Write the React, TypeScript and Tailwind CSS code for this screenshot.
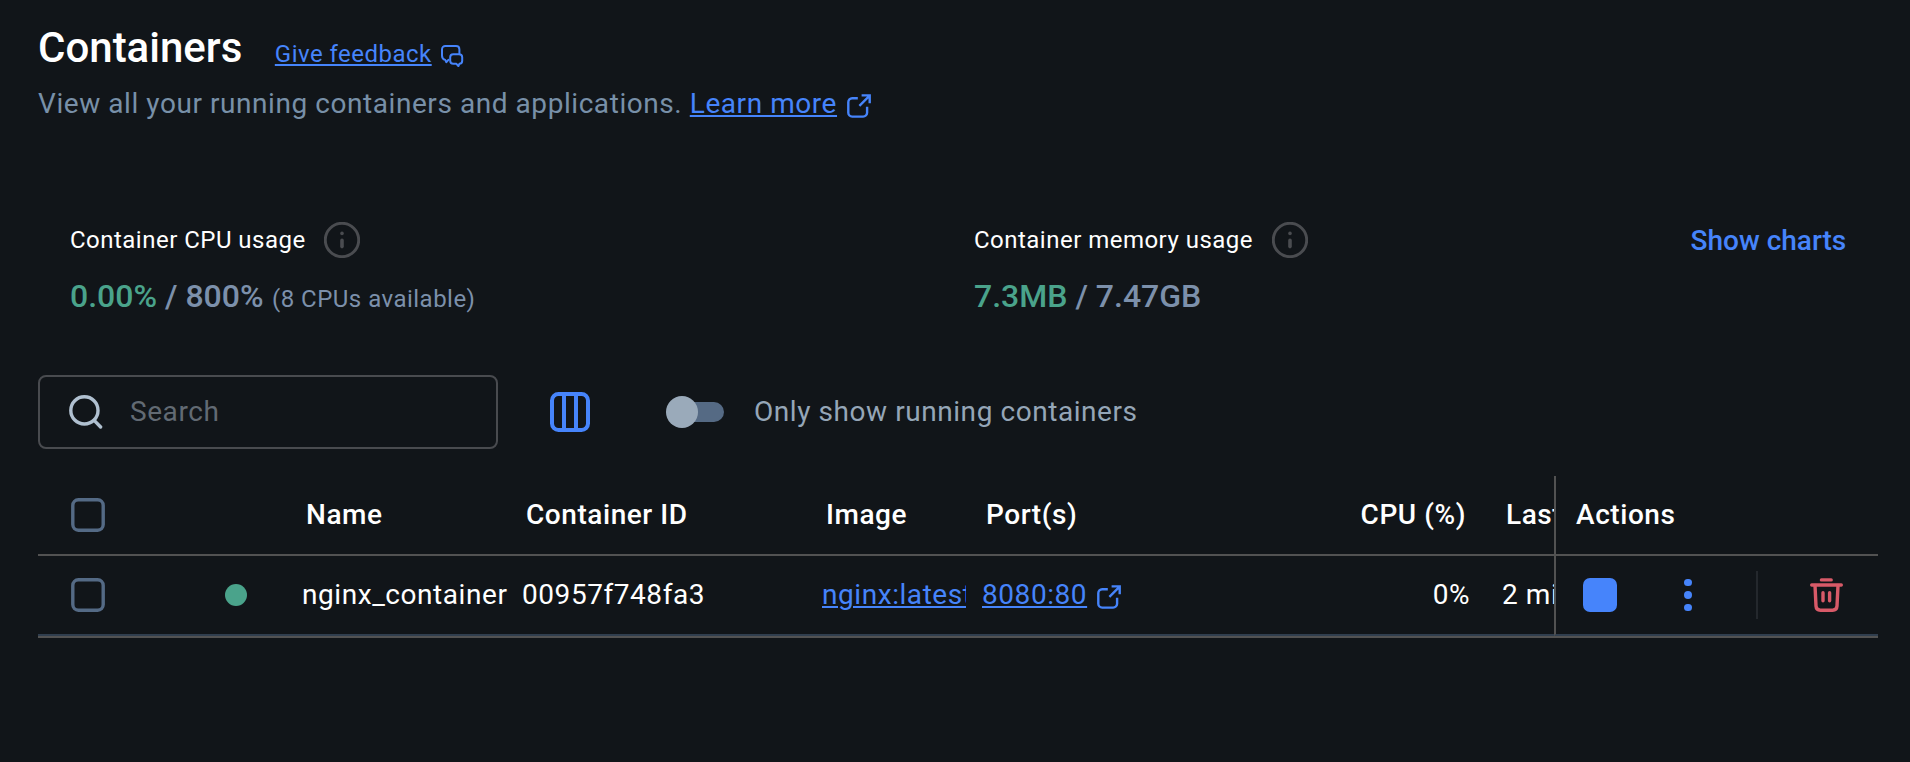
import type { ReactNode } from "react";

function FeedbackIcon() {
  return (
    <svg className="size-6" viewBox="0 0 24 24" fill="none" stroke="currentColor" strokeWidth="2" strokeLinecap="round" strokeLinejoin="round">
      <path d="M8.4 15.8 6.4 18.2 5.2 15.9C3.2 15.4 2 14 2 11.8V5.4C2 3.2 3.4 2 5.4 2H16C18 2 19.4 3.2 19.4 5.4V9.2" />
      <path d="M13.2 10.2H19C21 10.2 22.2 11.4 22.2 13.2V16.8C22.2 18.6 21 19.8 19.4 19.8L18.4 22 16.4 19.8H13.2C11.4 19.8 10.2 18.6 10.2 16.8V13.2C10.2 11.4 11.4 10.2 13.2 10.2Z" />
    </svg>
  );
}

function ExternalIcon() {
  return (
    <svg className="size-6 shrink-0" viewBox="0 0 24 24" fill="none" stroke="currentColor" strokeWidth="2.4">
      <path d="M10.8 4.2H5.2A4 4 0 0 0 1.3 8.2V18.7A4 4 0 0 0 5.2 22.6H16A4 4 0 0 0 20.1 18.7V12.8" />
      <path d="M12.4 11.8 22.4 1.8M14.6 1.4H22.7V9.2" />
    </svg>
  );
}

function InfoIcon() {
  return (
    <svg className="size-9" viewBox="0 0 36 36" fill="none" stroke="currentColor">
      <circle cx="18" cy="18" r="16.7" strokeWidth="2.9" />
      <path d="M18 18.4V24.6" strokeWidth="3.6" strokeLinecap="round" />
      <circle cx="18" cy="11.4" r="1.8" fill="currentColor" stroke="none" />
    </svg>
  );
}

function SearchIcon() {
  return (
    <svg className="h-[34px] w-[34px]" viewBox="0 0 34 34" fill="none" stroke="currentColor" strokeWidth="3.4" strokeLinecap="round">
      <circle cx="15.4" cy="15.4" r="13.6" />
      <path d="M25.4 25.6 31.6 32" />
    </svg>
  );
}

function ColumnsIcon() {
  return (
    <svg className="size-10" viewBox="0 0 40 40" fill="none" stroke="currentColor" strokeWidth="4">
      <rect x="2" y="2" width="36" height="36" rx="6.5" />
      <path d="M14 2V38M26 2V38" />
    </svg>
  );
}

function TrashIcon() {
  return (
    <svg className="h-[34px] w-[33px]" viewBox="0 0 33 34" fill="none" stroke="currentColor" strokeWidth="3.4" strokeLinecap="round" strokeLinejoin="round">
      <path d="M11.4 1.9H21.2M1.7 7H31.3" />
      <path d="M5 7.4 6 28.2C6.2 31 7.8 32.2 10.4 32.2H22.6C25.2 32.2 26.8 31 27 28.2L28 7.4" />
      <path d="M13 14.8V22.8M19.6 14.8V22.8" />
    </svg>
  );
}

function Link({ children }: { children: ReactNode }) {
  return (
    <a href="#" className="text-[#4684fb] underline decoration-2 underline-offset-[2px]">
      {children}
    </a>
  );
}

function Checkbox() {
  return (
    <svg className="ml-[33px] size-[34px] shrink-0 text-[#546a85]" viewBox="0 0 34 34" fill="none" stroke="currentColor" strokeWidth="3.4">
      <rect x="1.8" y="1.8" width="30.4" height="30.4" rx="5.6" />
    </svg>
  );
}

function Usage({ label, used, limit, note }: { label: string; used: string; limit: string; note?: string }) {
  return (
    <div className="w-[904px]">
      <div className="flex h-9 items-center">
        <span className="text-[24px] leading-9 tracking-[0.02em] text-white">{label}</span>
        <span className="ml-[18.8px] text-[#4a4c50]">
          <InfoIcon />
        </span>
      </div>
      <div className="mt-[18px] h-10 whitespace-pre text-[32px] leading-10 font-medium text-[#7c90ab]">
        <span className="text-[#4aa38b]">{used}</span> / {limit}{" "}
        {note && <span className="ml-[0.5px] text-[24px] leading-none font-normal tracking-[0.02em]">{note}</span>}
      </div>
    </div>
  );
}

export default function App() {
  return (
    <main className="h-[762px] w-[1910px] overflow-hidden bg-[#111519] px-[38px] pt-6 pr-8 font-['Roboto',sans-serif] text-white">
      <header>
        <div className="flex h-12 items-baseline">
          <h1 className="text-[42px] leading-[48px] font-medium">Containers</h1>
          <div className="ml-[32.5px] flex items-center text-[24px] leading-9 tracking-[0.02em]">
            <Link>Give feedback</Link>
            <span className="mt-1 ml-[8.5px] text-[#4684fb]">
              <FeedbackIcon />
            </span>
          </div>
        </div>
        <div className="mt-3 flex h-10 items-center whitespace-pre text-[28px] leading-10 tracking-[0.02em] text-[#7890a8]">
          <span>View all your running containers and applications. </span>
          <Link>Learn more</Link>
          <span className="mt-1 ml-[10px] text-[#4684fb]">
            <ExternalIcon />
          </span>
        </div>
      </header>

      <section className="mt-[98px] flex pl-8">
        <Usage label="Container CPU usage" used="0.00%" limit="800%" note="(8 CPUs available)" />
        <Usage label="Container memory usage" used="7.3MB" limit="7.47GB" />
        <button className="-ml-[187.5px] h-[38px] text-[28px] leading-[38px] font-medium whitespace-nowrap text-[#4684fb]">Show charts</button>
      </section>

      <section className="mt-[59px] flex h-[74px] items-center">
        <div className="flex h-[74px] w-[460px] items-center rounded-[8px] border-2 border-[#494b4f] pl-[29px]">
          <span className="text-[#b0c0d0]">
            <SearchIcon />
          </span>
          <span className="ml-[27px] text-[28px] leading-10 tracking-[0.02em] text-[#626a73]">Search</span>
        </div>
        <button className="ml-[52px] text-[#4684fb]">
          <ColumnsIcon />
        </button>
        <span className="ml-[76px] flex w-[58px] items-center">
          <span className="z-10 size-8 shrink-0 rounded-full bg-[#9aaaba]" />
          <span className="-ml-4 h-5 w-[42px] rounded-r-full bg-[#556a84]" />
        </span>
        <span className="ml-[30px] text-[28px] leading-10 tracking-[0.02em] text-[#95a6b7]">Only show running containers</span>
      </section>

      <section className="mt-[27px] flex w-[1840px] border-b-2 border-[#525252] text-[28px] leading-10 tracking-[0.02em] whitespace-nowrap">
        <div className="w-[1516px] overflow-hidden">
          <div className="flex h-20 items-center border-b-2 border-[#525252] font-medium">
            <div className="flex w-[256px]">
              <Checkbox />
            </div>
            <div className="w-[220px] pl-3">Name</div>
            <div className="w-[300px] pl-3">Container ID</div>
            <div className="w-[160px] pl-3">Image</div>
            <div className="w-[300px] pl-3">Port(s)</div>
            <div className="w-[220px] pr-7 text-right">CPU (%)</div>
            <div className="w-[60px] overflow-hidden pl-3">Last started</div>
          </div>
          <div className="flex h-20 items-center border-b-2 border-[#303e4e]">
            <div className="flex w-[256px] items-center">
              <Checkbox />
              <span className="ml-[120px] size-[22px] rounded-full bg-[#4aa38b]" />
            </div>
            <div className="w-[220px] px-2">nginx_container</div>
            <div className="w-[300px] px-2">00957f748fa3</div>
            <div className="w-[160px] px-2">
              <div className="overflow-hidden">
                <Link>nginx:latest</Link>
              </div>
            </div>
            <div className="flex w-[300px] items-center px-2 text-[#4684fb]">
              <Link>8080:80</Link>
              <span className="mt-1 ml-[10px]">
                <ExternalIcon />
              </span>
            </div>
            <div className="w-[220px] pr-6 text-right">0%</div>
            <div className="w-[60px] overflow-hidden pl-2">2 minutes ago</div>
          </div>
        </div>
        <div className="w-[324px]">
          <div className="flex h-20 items-center border-b-2 border-l-2 border-[#525252] pl-5 font-medium">Actions</div>
          <div className="flex h-20 items-center border-b-2 border-l-2 border-b-[#303e4e] border-l-[#525252]">
            <span className="ml-[27px] size-[34px] rounded-[7px] bg-[#4684fb]" />
            <span className="ml-[67px] flex flex-col gap-[5px]">
              <span className="size-[7.5px] rounded-full bg-[#4684fb]" />
              <span className="size-[7.5px] rounded-full bg-[#4684fb]" />
              <span className="size-[7.5px] rounded-full bg-[#4684fb]" />
            </span>
            <span className="ml-[64.5px] h-12 w-[2px] bg-[#24282d]" />
            <span className="ml-[52px] text-[#d85a68]">
              <TrashIcon />
            </span>
          </div>
        </div>
      </section>
    </main>
  );
}
